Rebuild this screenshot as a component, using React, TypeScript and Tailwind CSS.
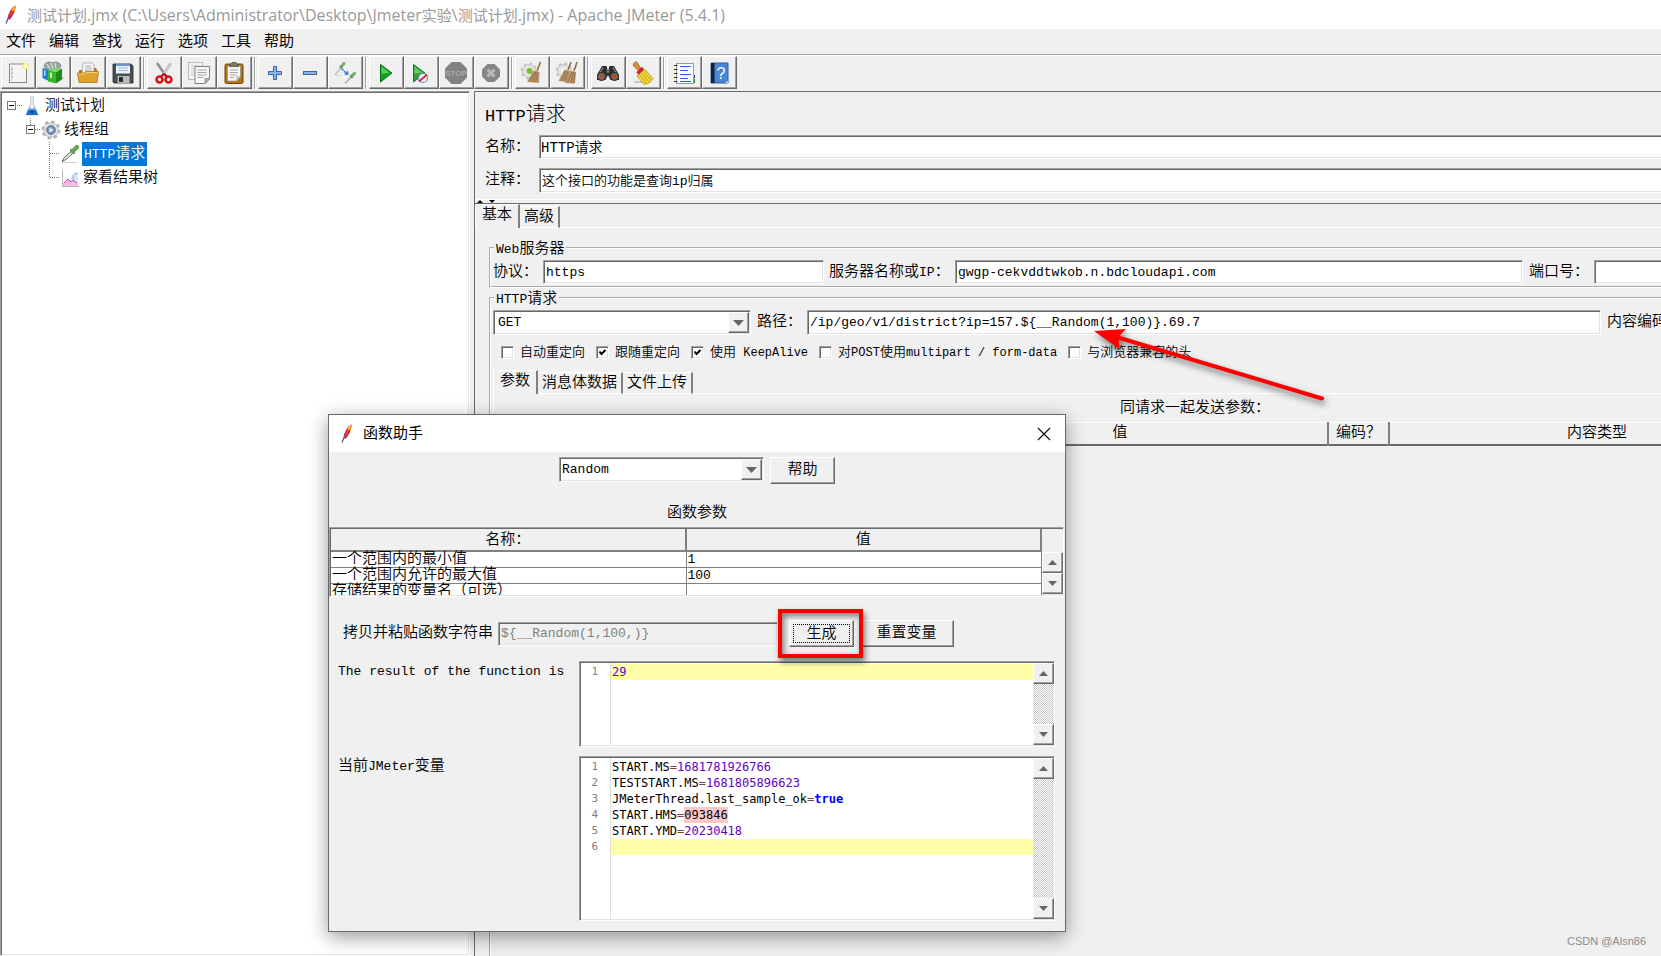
import React from "react";

const raised =
  "border border-t-white border-l-white border-b-[#696969] border-r-[#696969] shadow-[inset_-1px_-1px_0_#a0a0a0] bg-[#f0f0f0]";
const sunken =
  "border border-t-[#a0a0a0] border-l-[#a0a0a0] border-r-white border-b-white shadow-[inset_1px_1px_0_#696969,inset_-1px_-1px_0_#e3e3e3]";
const etched = "border-2 [border-style:groove] border-white min-w-0";

/* Latin runs are set in a size of their own beside the Chinese text. */
function Mix({ children, latin = "text-[13px]" }: { children: string; latin?: string }) {
  return (
    <>
      {children.split(/([\x20-\x7e]+)/).map((part, i) =>
        i % 2 ? (
          <span key={i} className={latin}>
            {part}
          </span>
        ) : (
          part
        ),
      )}
    </>
  );
}

function Feather() {
  return (
    <svg viewBox="0 0 12 20" className="h-5 w-3 shrink-0">
      <path d="M10.5 0.5C7 2 3.500 7 2.500 14L4.500 14.500C7.500 12 10.500 6 10.500 0.500Z" fill="#d22128" />
      <path d="M10.500 0.500C8.500 1.500 7 3 6 5L9.500 6.500C10.500 4.500 11 2.500 10.500 0.500Z" fill="#f69923" />
      <path d="M3.500 9.500L2.500 14L4.500 14.500L6.500 11.500Z" fill="#97245f" />
      <path d="M2.800 14L1 18.500" stroke="#5a3a86" strokeWidth="1.100" />
      <path d="M9.500 2L3.500 13.500" stroke="#fbd0a0" strokeWidth="0.400" />
    </svg>
  );
}

const svg = "size-6";
const NewIcon = () => (
  <svg viewBox="0 0 24 24" className={svg}>
    <rect x="3.500" y="3" width="17" height="18.500" fill="#f5f5f5" stroke="#888" />
    <path d="M5.500 5v15" stroke="#ccc" />
    <path d="M6 8h1M6 12h1M6 16h1" stroke="#777" />
    <circle cx="19.500" cy="5" r="3.200" fill="#f8ee7a" />
    <circle cx="19.500" cy="5" r="1.500" fill="#fff" />
  </svg>
);
const TemplatesIcon = () => (
  <svg viewBox="0 0 24 24" className={svg}>
    <path d="M3 5C4 1 9 0 11 2C14 0 19 1 20 5L17 9H5Z" fill="#9aa5a8" stroke="#5b6a70" strokeWidth="0.600" />
    <path d="M6 3l3 5M10 2l2 6M14 2l1 6" stroke="#e8eef0" />
    <path d="M1.500 7L8 9V20L1.500 17Z" fill="#1d82c8" />
    <path d="M3 9L4.500 9.500V15L3 14.500Z" fill="#a8dcf8" />
    <path d="M8 9L13 7V20L8 21Z" fill="#2aa0dd" />
    <path d="M17 22L23 17L20 15Z" fill="#888" opacity="0.600" />
    <path d="M7 9.500L15 11V22.500L7 20.500Z" fill="#3cb52c" />
    <path d="M9 11.500L11 12V17L9 16.500Z" fill="#c5f3b3" />
    <path d="M15 11L21 7.500V18L15 22.500Z" fill="#1f8a19" />
    <path d="M7 9.500L13 7L21 7.500L15 11Z" fill="#7ddc5f" />
  </svg>
);
const OpenIcon = () => (
  <svg viewBox="0 0 24 24" className={svg}>
    <path d="M3 9H8L9 7H20L21 9V19H3Z" fill="#b87912" />
    <path d="M7 2H16L18 4V13H6Z" fill="#fafafa" stroke="#999" strokeWidth="0.700" />
    <path d="M9 5h6M9 7h7M9 9h7" stroke="#999" strokeWidth="0.800" />
    <path d="M1.500 12H8L9.500 10.500H22.500L21 21.500H3Z" fill="#dfa32f" stroke="#a86c0b" strokeWidth="0.700" />
    <path d="M3 13H8.500L10 11.500H21.500" stroke="#fbdc8c" fill="none" strokeWidth="0.800" />
  </svg>
);
const SaveIcon = () => (
  <svg viewBox="0 0 24 24" className={svg}>
    <path d="M2 3H20L22 5V22H3L2 21Z" fill="#4a4d50" stroke="#27292b" strokeWidth="0.800" />
    <rect x="5" y="3" width="14" height="9.500" fill="#eef4fb" />
    <path d="M5 4h14" stroke="#6c95cf" strokeWidth="2" />
    <path d="M7 7h10M7 9.500h10" stroke="#9db9dc" />
    <rect x="6.500" y="15" width="12" height="7" fill="#b9bcbf" />
    <rect x="8" y="16" width="4" height="5" fill="#2b2d2f" />
  </svg>
);
const CutIcon = () => (
  <svg viewBox="0 0 24 24" className={svg}>
    <path d="M5 2L14.500 16" stroke="#8e9396" strokeWidth="2.600" />
    <path d="M19 2L9.500 16" stroke="#aeb3b6" strokeWidth="2.600" />
    <path d="M19 2L10 15" stroke="#eee" strokeWidth="0.800" />
    <circle cx="7.500" cy="18.500" r="3" fill="none" stroke="#d9141c" strokeWidth="2.600" />
    <circle cx="16.500" cy="18.500" r="3" fill="none" stroke="#d9141c" strokeWidth="2.600" />
    <path d="M9 15.500L12 13L15 15.500" stroke="#b80d14" strokeWidth="1.800" fill="none" />
  </svg>
);
const CopyIcon = () => (
  <svg viewBox="0 0 24 24" className={svg}>
    <rect x="1.500" y="1.500" width="14" height="17" fill="#f3f3f3" stroke="#bbb" />
    <path d="M4 5h9M4 8h4M4 11h4M4 14h4" stroke="#c4c4c4" />
    <path d="M8 5.500H22.500V18L18 22.500H8Z" fill="#f8f8f8" stroke="#808080" />
    <path d="M22.500 17.500H18V22.500Z" fill="#bbb" stroke="#777" strokeWidth="0.700" />
    <path d="M10.500 9h9M10.500 11.500h9M10.500 14h9M10.500 16.500h6" stroke="#a4a4a4" />
  </svg>
);
const PasteIcon = () => (
  <svg viewBox="0 0 24 24" className={svg}>
    <rect x="3" y="3" width="18" height="19.500" rx="1.500" fill="#b57413" stroke="#6d430a" />
    <path d="M5.500 5H18.500V16L14.500 20H5.500Z" fill="#f7f7f7" stroke="#8b8b8b" strokeWidth="0.600" />
    <path d="M18.500 15.500H14.500V20Z" fill="#b5b5b5" />
    <path d="M8 9h8M8 11.500h8M8 14h7M8 16.500h4" stroke="#a5a5a5" />
    <path d="M7.500 5.500C7.500 3 9.500 3.500 10 1.500H14C14.500 3.500 16.500 3 16.500 5.500Z" fill="#777b70" stroke="#45483f" strokeWidth="0.700" />
  </svg>
);
const PlusIcon = () => (
  <svg viewBox="0 0 24 24" className={svg}>
    <path d="M10.500 5.500h3v5h5v3h-5v5h-3v-5h-5v-3h5Z" fill="#8db5e2" stroke="#3566a8" />
  </svg>
);
const MinusIcon = () => (
  <svg viewBox="0 0 24 24" className={svg}>
    <rect x="5.500" y="10.500" width="13" height="3" fill="#8db5e2" stroke="#3566a8" />
  </svg>
);
const ToggleIcon = () => (
  <svg viewBox="0 0 24 24" className={svg}>
    <path d="M2 14L8 6.500" stroke="#c0c5c2" strokeWidth="1.800" />
    <path d="M3 14.500H8" stroke="#d5d5d5" />
    <path d="M8 6L11 2.500" stroke="#7fb073" strokeWidth="3.200" strokeLinecap="round" />
    <path d="M7 5L9.500 7.500" stroke="#6d8169" strokeWidth="1.200" />
    <path d="M9 8L13 12" stroke="#2f78d8" strokeWidth="1.600" strokeDasharray="2 1" />
    <path d="M15.500 14L11 13.500L15 9.500Z" fill="#2f78d8" />
    <path d="M12 22.500L18 16" stroke="#b0b5b2" strokeWidth="1.800" />
    <path d="M18.500 15.500L21.500 12.500" stroke="#7fb073" strokeWidth="3.200" strokeLinecap="round" />
    <path d="M17 14.500L19.500 17" stroke="#6d8169" strokeWidth="1.200" />
  </svg>
);
const PlayIcon = () => (
  <svg viewBox="0 0 24 24" className={svg}>
    <path d="M6.500 3.500L18 12L6.500 21Z" fill="#13a021" stroke="#0b6c14" />
    <path d="M7.500 5.500L15.500 11.500L7.500 13Z" fill="#4fce55" />
  </svg>
);
const PlayNowIcon = () => (
  <svg viewBox="0 0 24 24" className={svg}>
    <path d="M4.500 3.500L16 12L4.500 21Z" fill="#2a9e30" stroke="#1b7a22" />
    <path d="M5.500 5.500L13.500 11.500L5.500 13Z" fill="#66c868" />
    <circle cx="14" cy="17" r="4.500" fill="#eef2fb" stroke="#6d87bd" strokeWidth="1.200" />
    <path d="M10 20.500L18 13.500" stroke="#e02626" strokeWidth="1.700" />
  </svg>
);
const StopIcon = () => (
  <svg viewBox="0 0 24 24" className={svg}>
    <path d="M7.500 1H16.500L23 7.500V16.500L16.500 23H7.500L1 16.500V7.500Z" fill="#828282" />
    <text x="12" y="15" textAnchor="middle" fontSize="8" fontWeight="700" fontFamily="Liberation Sans, sans-serif" fill="#a8a8a8">
      STOP
    </text>
  </svg>
);
const ShutdownIcon = () => (
  <svg viewBox="0 0 24 24" className={svg}>
    <path d="M8.500 3H15.500L21 8.500V15.500L15.500 21H8.500L3 15.500V8.500Z" fill="#868686" />
    <path d="M8.500 8.500L15.500 15.500M15.500 8.500L8.500 15.500" stroke="#b8b8b8" strokeWidth="3" />
  </svg>
);
const GearShape = () => (
  <g>
    <circle cx="9" cy="10" r="7.200" fill="none" stroke="#c6c9c3" strokeWidth="2.400" strokeDasharray="3 2.650" />
    <circle cx="9" cy="10" r="6.500" fill="#e2e4e0" stroke="#b9bcb5" strokeWidth="0.700" />
    <circle cx="9" cy="10" r="3.200" fill="#f3f3f0" />
  </g>
);
const ClearIcon = () => (
  <svg viewBox="0 0 24 24" className={svg}>
    <GearShape />
    <circle cx="9.500" cy="10" r="3" fill="#79c023" />
    <path d="M20.500 1L17 10" stroke="#9a6d3c" strokeWidth="1.600" />
    <path d="M13.500 9.500L19.500 11L19 22L7 21Z" fill="#b9946a" />
    <path d="M14.500 11L9.500 20.500M16 11L12.500 21M17.500 11.500L15.500 21" stroke="#8a643a" strokeWidth="0.800" />
  </svg>
);
const ClearAllIcon = () => (
  <svg viewBox="0 0 24 24" className={svg}>
    <GearShape />
    <path d="M16 1L13 9M22 1L19 10" stroke="#9a6d3c" strokeWidth="1.600" />
    <path d="M9.500 8.500L15 10L12 21L3.500 20Z" fill="#b5936a" />
    <path d="M15.500 9.500L21 11L20 22.500L9.500 22Z" fill="#b9946a" />
    <path d="M11 10L6.500 19.500M13 11L9.500 20M17 11L12.500 21.500M18.500 11L16 22M20 11.500L18.500 22" stroke="#8a643a" strokeWidth="0.800" />
  </svg>
);
const FindIcon = () => (
  <svg viewBox="0 0 24 24" className={svg}>
    <path d="M6 5H10.500L11.500 9H12.500L13.500 5H18L23 14V19H14.500L12 14L9.500 19H1V14Z" fill="#2c2c2c" />
    <path d="M7 6.500L4.500 11M17 6.500L19.500 11" stroke="#8b8b8b" strokeWidth="1.300" />
    <circle cx="5.500" cy="15.500" r="4.500" fill="#3b3b3b" />
    <circle cx="18.500" cy="15.500" r="4.500" fill="#3b3b3b" />
    <circle cx="5.500" cy="15.500" r="2.800" fill="#a4532c" stroke="#999" strokeWidth="0.500" />
    <circle cx="18.500" cy="15.500" r="2.800" fill="#a4532c" stroke="#999" strokeWidth="0.500" />
    <circle cx="12" cy="10.500" r="1.500" fill="#777" />
  </svg>
);
const BroomIcon = () => (
  <svg viewBox="0 0 24 24" className={svg}>
    <path d="M3 21H20" stroke="#bbb" strokeWidth="1.500" />
    <path d="M3 2C4.500 0 7 1 7 3L10 8L7.500 9.500L3.500 6C2 5 2 3 3 2Z" fill="#d98e3a" stroke="#8c5515" strokeWidth="0.700" />
    <path d="M11 11L6 15L13 23.500C17 23 21 20.500 22 17.500L14 8.500Z" fill="#f0d53c" stroke="#a88a0c" strokeWidth="0.700" />
    <path d="M9 14.500L15 22M11 13L18 21M13 11.500L20 19" stroke="#bb9c16" strokeWidth="0.900" />
    <path d="M6.500 12.500L12 7" stroke="#d51f2c" strokeWidth="3.200" />
  </svg>
);
const LogIcon = () => (
  <svg viewBox="0 0 24 24" className={svg}>
    <path d="M20 14h3v3h-3z" fill="#2144c4" />
    <path d="M20 18h3v4h-3z" fill="#1c8c28" />
    <rect x="4.500" y="2.500" width="17" height="20" fill="#fdfdfd" stroke="#999" />
    <path d="M8 5.500h11M8 9.500h8M8 13.500h11M8 17.500h8M8 20.500h11" stroke="#1a6ae0" strokeWidth="1.200" />
    <path d="M2 4.500h3.500M2 8.500h3.500M2 12.500h3.500M2 16.500h3.500M2 20.500h3.500" stroke="#333" strokeWidth="1.200" />
  </svg>
);
const HelpIcon = () => (
  <svg viewBox="0 0 24 24" className={svg}>
    <path d="M4 2H21V22H4Z" fill="#4a86d6" stroke="#2c5c9f" />
    <path d="M4 2H7.500V22H4Z" fill="#17212f" />
    <path d="M21 20L18 22H21Z" fill="#ddd" />
    <text x="14" y="17.500" textAnchor="middle" fontSize="16" fontFamily="Liberation Sans, sans-serif" fill="#fff">
      ?
    </text>
  </svg>
);

const toolGroups: [string, () => React.JSX.Element][][] = [
  [["新建", NewIcon], ["模板", TemplatesIcon], ["打开", OpenIcon], ["保存", SaveIcon]],
  [["剪切", CutIcon], ["复制", CopyIcon], ["粘贴", PasteIcon]],
  [["展开", PlusIcon], ["折叠", MinusIcon], ["切换", ToggleIcon]],
  [["启动", PlayIcon], ["不停顿启动", PlayNowIcon], ["停止", StopIcon], ["关闭", ShutdownIcon]],
  [["清除", ClearIcon], ["清除全部", ClearAllIcon]],
  [["搜索", FindIcon], ["重置搜索", BroomIcon]],
  [["函数助手", LogIcon], ["帮助", HelpIcon]],
];

function Toolbar() {
  return (
    <div className="flex h-9 shrink-0 items-center border-t border-[#a0a0a0] bg-[#f0f0f0] pl-px shadow-[inset_0_1px_0_#fff]">
      {toolGroups.map((group, g) => (
        <div key={g} className="flex items-center">
          {g > 0 && <span className="mx-0.5 h-8 w-0.5 border-l border-[#a0a0a0] bg-white" />}
          {group.map(([name, Icon]) => (
            <button key={name} aria-label={name} className={`${raised} flex h-[33px] w-[35px] items-center justify-center pr-0.5`}>
              <Icon />
            </button>
          ))}
        </div>
      ))}
    </div>
  );
}

const dots = { stroke: "#777", strokeDasharray: "1 1", fill: "none" };
function Expander({ x }: { x: number }) {
  return (
    <g>
      <rect x={x + 0.5} y="7.500" width="8" height="8" fill="#fff" stroke="#777" />
      <path d={`M${x + 2} 11.500h5`} stroke="#000" />
    </g>
  );
}
const FlaskIcon = () => (
  <svg viewBox="0 0 14 20" className="h-5 w-3.5">
    <path d="M5.500 1H8.500V8L13 19H1L5.500 8Z" fill="#e9eef3" stroke="#b4bfca" strokeWidth="0.800" />
    <path d="M3.500 12.500H10.500L13 19H1Z" fill="#1b6fc9" />
    <path d="M3.500 12.500H10.500L11 14H3Z" fill="#7fb2e6" />
    <circle cx="7" cy="16" r="1.500" fill="#0d3f86" />
  </svg>
);
const ThreadIcon = () => (
  <svg viewBox="0 0 20 20" className="size-5">
    <circle cx="10" cy="10" r="8" fill="none" stroke="#b4b4b4" strokeWidth="3" strokeDasharray="3.300 2.980" />
    <circle cx="10" cy="10" r="7.200" fill="#e2e2e2" stroke="#aaa" strokeWidth="0.700" />
    <circle cx="10" cy="10" r="4.200" fill="#7d9cc9" stroke="#3f5f93" />
    <path d="M8.500 7.500L12.500 10L8.500 12.500Z" fill="#e6eefb" />
  </svg>
);
const DropperIcon = () => (
  <svg viewBox="0 0 20 20" className="size-5">
    <path d="M2 18.500H17" stroke="#ccc" />
    <path d="M2 17.500L4 14L11 7L13 9L6 15.500Z" fill="#e6e9e6" stroke="#555" strokeWidth="0.900" />
    <path d="M10.500 5.500L14.500 9.500" stroke="#3d5c38" strokeWidth="2" />
    <path d="M12.500 7.500L17 3" stroke="#64a656" strokeWidth="4.200" strokeLinecap="round" />
  </svg>
);
const ChartIcon = () => (
  <svg viewBox="0 0 20 20" className="size-5">
    <path d="M2.500 2V18.500H19" stroke="#b5b5b5" fill="none" />
    <path d="M3 18V15L8 11L11 14.500L17 13L18 18Z" fill="#f6b8e6" />
    <path d="M10 14C12 6 15 4 18 4V13C15 15 12 15 10 14Z" fill="#d5e6fb" />
    <path d="M4 15L8 11L10.500 14L13 12.500L17 15" stroke="#d23fb4" fill="none" />
    <path d="M17 5C13 6 12 9 14 12" stroke="#7fa6e2" fill="none" />
  </svg>
);

function Tree() {
  const row = "flex h-6 items-center";
  return (
    <nav aria-label="测试计划树" className={`${sunken} w-[470px] shrink-0 bg-white pt-0.5 pl-0.5 text-[15px]`}>
      <div className={row}>
        <svg viewBox="0 0 22 24" className="h-6 w-[22px]">
          <path d="M14 11.500H20" {...dots} />
          <Expander x={4} />
        </svg>
        <FlaskIcon />
        <span className="ml-1.5 pt-0.5">测试计划</span>
      </div>
      <div className={row}>
        <svg viewBox="0 0 38 24" className="h-6 w-[38px]">
          <path d="M27.500 0V7M32 11.500H38" {...dots} />
          <Expander x={23} />
        </svg>
        <ThreadIcon />
        <span className="ml-[3px] pt-0.5">线程组</span>
      </div>
      <div className={row}>
        <svg viewBox="0 0 57 24" className="h-6 w-[57px]">
          <path d="M46.500 0V24M47 11.500H57" {...dots} />
        </svg>
        <DropperIcon />
        <span className="ml-0.5 flex h-6 items-center bg-[#0078d7] px-0.5 pt-0.5 text-white">
          <span><Mix>HTTP请求</Mix></span>
        </span>
      </div>
      <div className={row}>
        <svg viewBox="0 0 57 24" className="h-6 w-[57px]">
          <path d="M46.500 0V12M47 11.500H57" {...dots} />
        </svg>
        <ChartIcon />
        <span className="ml-[3px] pt-0.5">察看结果树</span>
      </div>
    </nav>
  );
}

function Tabs({ names }: { names: string[] }) {
  return (
    <div role="tablist" className="flex h-6 items-end text-[15px] leading-5">
      {names.map((name, i) =>
        i === 0 ? (
          <button
            key={name}
            role="tab"
            aria-selected
            className="h-6 border-t border-l border-t-white border-l-white border-r-2 border-r-[#808080] px-1.5 pb-px"
          >
            {name}
          </button>
        ) : (
          <button
            key={name}
            role="tab"
            aria-selected={false}
            className="h-[22px] border-t border-b border-white border-r-2 border-r-[#808080] px-1 pt-px"
          >
            {name}
          </button>
        ),
      )}
      <span className="h-px flex-1 bg-white" />
    </div>
  );
}

function ComboBox({ id, label, value, className }: { id: string; label: string; value: string; className: string }) {
  return (
    <div className={`relative shrink-0 ${className}`}>
      <select id={id} aria-label={label} defaultValue={value} className={`${sunken} h-full w-full appearance-none bg-white text-[13px] ${id === "method" ? "pl-1" : "pl-0.5"}`}>
        <option>{value}</option>
      </select>
      <span className={`${raised} pointer-events-none absolute inset-y-0.5 right-0.5 flex w-[21px] items-center justify-center`}>
        <svg viewBox="0 0 11 6" className="h-1.5 w-[11px]">
          <path d="M0 0H11L5.500 6Z" fill="#666" />
        </svg>
      </span>
    </div>
  );
}

function Check({ label, checked = false }: { label: string; checked?: boolean }) {
  return (
    <label className="flex items-center gap-1.5 whitespace-nowrap">
      <span className="grid">
        <input type="checkbox" defaultChecked={checked} className={`${sunken} peer col-start-1 row-start-1 size-[13px] appearance-none bg-white`} />
        <svg viewBox="0 0 13 13" className="pointer-events-none invisible col-start-1 row-start-1 size-[13px] peer-checked:visible">
          <path d="M3.500 5.500L5.500 8L9.500 4" stroke="#000" strokeWidth="2" fill="none" />
        </svg>
      </span>
      <span className="pt-0.5 whitespace-pre">
        <Mix latin="text-[12px]">{label}</Mix>
      </span>
    </label>
  );
}

const field = `${sunken} bg-white pl-0.5 text-[13px] outline-none`;
const label = "shrink-0 pt-0.5";

function RequestPane() {
  return (
    <main className="ml-1 flex min-w-0 flex-1 flex-col overflow-hidden border-t border-l border-[#696969] bg-[#f0f0f0] text-[15px] whitespace-nowrap">
      <h1 className="flex h-[43px] items-center pt-1 pl-2.5 text-[20px] font-light">
        <span>
          <Mix latin="text-[17px]">HTTP请求</Mix>
        </span>
      </h1>
      <div className="flex h-6 items-center pl-2.5">
        <label htmlFor="name" className={`${label} w-[54px]`}>名称：</label>
        <input id="name" defaultValue="HTTP请求" className={`${sunken} -mr-1 h-6 min-w-0 flex-1 bg-white pb-0.5 pl-px text-[14px]`} />
      </div>
      <div className="mt-[9px] flex h-[25px] items-center pl-2.5">
        <label htmlFor="comment" className={`${label} w-[54px]`}>注释：</label>
        <input id="comment" defaultValue="这个接口的功能是查询ip归属" className={`${field} -mr-1 h-[25px] min-w-0 flex-1 pb-0.5`} />
      </div>
      <div className="mt-1.5 flex h-[5px] items-start border-t border-b border-t-white border-b-[#696969] pl-0.5">
        <svg viewBox="0 0 18 3" className="h-[3px] w-[18px]">
          <path d="M0 3H6L3 0ZM12 0H18L15 3Z" fill="#000" />
        </svg>
      </div>
      <Tabs names={["基本", "高级"]} />

      <div className="flex flex-1 flex-col pt-3 pl-3.5">
        <fieldset className={`${etched} border-r-0 pb-0.5 pl-0.5`}>
          <legend className="ml-px h-4 px-0.5 pt-0.5 leading-4">
            <Mix>Web服务器</Mix>
          </legend>
          <div className="flex h-7 items-center pt-1">
            <label htmlFor="protocol" className={`${label} w-[50px]`}>协议：</label>
            <input id="protocol" defaultValue="https" className={`${field} h-6 w-[281px] shrink-0`} />
            <label htmlFor="server" className={`${label} ml-[5px] w-[126px]`}>
              <Mix>服务器名称或IP：</Mix>
            </label>
            <input id="server" defaultValue="gwgp-cekvddtwkob.n.bdcloudapi.com" className={`${field} h-6 min-w-0 flex-1`} />
            <label htmlFor="port" className={`${label} ml-1.5 w-[65px]`}>端口号：</label>
            <input id="port" className={`${field} -mr-1 h-6 w-[71px] shrink-0`} />
          </div>
        </fieldset>

        <fieldset className={`${etched} mt-0.5 flex-1 border-r-0 border-b-0 pl-0.5`}>
          <legend className="ml-px h-4 px-0.5 pt-0.5 leading-4">
            <Mix>HTTP请求</Mix>
          </legend>
          <div className="flex h-[29px] items-center pt-1">
            <ComboBox id="method" label="方法" value="GET" className="h-[25px] w-[258px]" />
            <label htmlFor="path" className={`${label} ml-1.5 w-[50px]`}>路径：</label>
            <input id="path" defaultValue="/ip/geo/v1/district?ip=157.${__Random(1,100)}.69.7" className={`${field} h-[25px] min-w-0 flex-1`} />
            <span className={`${label} ml-1.5 w-[54px]`}>内容编码</span>
          </div>
          <div className="mt-[7px] flex h-5 items-center gap-[11px] pl-2 text-[13px]">
            <Check label="自动重定向" />
            <Check label="跟随重定向" checked />
            <Check label="使用 KeepAlive" checked />
            <Check label="对POST使用multipart / form-data" />
            <Check label="与浏览器兼容的头" />
          </div>
          <div className="mt-2">
            <Tabs names={["参数", "消息体数据", "文件上传"]} />
          </div>
          <div className="overflow-hidden border-l border-white pl-0.5">
            <table className="w-[1398px] table-fixed border-collapse">
              <caption className="h-7 pt-px leading-7">同请求一起发送参数：</caption>
              <thead>
                <tr className="h-[22px] border-t border-b-2 border-t-white border-b-[#696969] leading-[18px] [&>*]:border-r-2 [&>*]:border-[#808080] [&>*]:p-0 [&>*]:pt-0.5 [&>*]:font-[350]">
                  <th className="w-[416px]">名称：</th>
                  <th className="w-[416px]">值</th>
                  <th className="w-[61px]">编码？</th>
                  <th className="w-[416px]">内容类型</th>
                  <td />
                </tr>
              </thead>
            </table>
          </div>
        </fieldset>
      </div>
    </main>
  );
}

function ScrollButton({ up = false }: { up?: boolean }) {
  return (
    <button aria-label={up ? "向上滚动" : "向下滚动"} className={`${raised} flex h-[21px] w-[21px] items-center justify-center`}>
      <svg viewBox="0 0 9 5" className="h-[5px] w-[9px]">
        <path d={up ? "M0 5H9L4.500 0Z" : "M0 0H9L4.500 5Z"} fill="#666" />
      </svg>
    </button>
  );
}

function Editor({ label, lines, active, className }: { label: string; lines: React.ReactNode[]; active: number; className: string }) {
  return (
    <div
      role="group"
      aria-label={label}
      className={`${sunken} flex min-w-0 flex-1 bg-white py-px pl-px font-['DejaVu_Sans_Mono',monospace] text-[12px] leading-4 font-normal ${className}`}
    >
      <div className="w-[30px] shrink-0 border-r border-[#ddd] pt-px pr-3 text-right text-[11px] text-[#808080]">
        {lines.map((_, i) => (
          <div key={i}>{i + 1}</div>
        ))}
      </div>
      <div className="min-w-0 flex-1 pt-px">
        {lines.map((line, i) => (
          <div key={i} className={`h-4 pl-px ${i === active ? "bg-[#ffffaa]" : ""}`}>
            {line}
          </div>
        ))}
      </div>
      <div className="flex flex-col justify-between bg-[repeating-conic-gradient(#fff_0_25%,#c8c8c8_0_50%)] bg-size-[2px_2px]">
        <ScrollButton up />
        <ScrollButton />
      </div>
    </div>
  );
}

function Entry({ name, children }: { name: string; children: React.ReactNode }) {
  return (
    <>
      {name}
      <span className="text-[#804040]">=</span>
      {children}
    </>
  );
}
const Num = ({ children }: { children: string }) => <span className="text-[#6400c8]">{children}</span>;

const params = [
  ["一个范围内的最小值", "1"],
  ["一个范围内允许的最大值", "100"],
  ["存储结果的变量名（可选）", ""],
];

function FunctionHelper() {
  return (
    <section
      role="dialog"
      aria-label="函数助手"
      className="absolute top-[414px] left-[328px] flex w-[738px] flex-col border border-[#696969] bg-[#f0f0f0] pb-2.5 text-[15px] whitespace-nowrap shadow-[0_5px_18px_rgba(0,0,0,0.4)]"
    >
      <header className="flex h-[37px] items-center bg-white pr-3.5 pl-3">
        <Feather />
        <h2 className="ml-2.5 flex-1 pt-[3px] font-normal">函数助手</h2>
        <button aria-label="关闭">
          <svg viewBox="0 0 14 14" className="size-3.5">
            <path d="M1 1L13 13M13 1L1 13" stroke="#111" strokeWidth="1.200" />
          </svg>
        </button>
      </header>

      <div className="mt-[5px] flex h-[27px] items-start justify-center gap-1.5">
        <ComboBox id="function" label="函数" value="Random" className="h-[25px] w-[205px]" />
        <button className={`${raised} h-[27px] w-[65px] leading-6`}>帮助</button>
      </div>

      <p className="mt-[18px] h-[25px] text-center leading-6">函数参数</p>

      <div className={`${sunken} mr-px flex h-[70px] overflow-hidden bg-white py-px pl-px`}>
        <div className="min-w-0 flex-1 overflow-hidden">
          <table className="w-full table-fixed border-separate border-spacing-0 leading-[15px]">
            <thead>
              <tr className="h-[23px] bg-[#f0f0f0] [&>th]:border-r-2 [&>th]:border-b-2 [&>th]:border-[#808080] [&>th]:p-0 [&>th]:pt-px [&>th]:font-[350]">
                <th>名称：</th>
                <th>值</th>
              </tr>
            </thead>
            <tbody>
              {params.map(([name, value]) => (
                <tr key={name} className="h-4 [&>td]:h-4 [&>td]:border-r [&>td]:border-b [&>td]:border-[#808080] [&>td]:p-0 [&>td]:pl-px">
                  <td>{name}</td>
                  <td className="text-[13px]">{value}</td>
                </tr>
              ))}
            </tbody>
          </table>
        </div>
        <div className="flex flex-col bg-[#f0f0f0] pt-[23px]">
          <ScrollButton up />
          <ScrollButton />
        </div>
      </div>

      <div className="mt-[11px] flex h-[51px] items-center pl-3.5">
        <label htmlFor="call" className={label}>拷贝并粘贴函数字符串</label>
        <input id="call" readOnly defaultValue="${__Random(1,100,)}" className={`${sunken} ml-[5px] h-6 w-[280px] bg-[#f0f0f0] pl-0.5 text-[13px] text-[#808080]`} />
        <div className="relative z-10 border-4 border-[#f90000] py-[7px] pr-[5px] pl-[7px] shadow-[2px_4px_6px_rgba(0,0,0,0.5),inset_2px_3px_6px_rgba(0,0,0,0.5)]">
          <button className={`${raised} flex h-[27px] w-[65px] p-[3px]`}>
            <span className="flex-1 border border-dotted border-black leading-5">生成</span>
          </button>
        </div>
        <button className={`${raised} -ml-1 h-[27px] w-[95px] leading-6`}>重置变量</button>
      </div>

      <div className="mt-0.5 flex pr-2.5 pl-[9px]">
        <p className="w-[241px] shrink-0 leading-[22px]">
          <Mix>The result of the function is</Mix>
        </p>
        <Editor label="函数结果" className="h-[86px]" active={0} lines={[<Num>29</Num>]} />
      </div>
      <div className="mt-[9px] flex pr-2.5 pl-[9px]">
        <p className="w-[241px] shrink-0 leading-[22px]">
          <Mix>当前JMeter变量</Mix>
        </p>
        <Editor
          label="当前JMeter变量"
          className="h-[165px]"
          active={5}
          lines={[
            <Entry name="START.MS"><Num>1681781926766</Num></Entry>,
            <Entry name="TESTSTART.MS"><Num>1681805896623</Num></Entry>,
            <Entry name="JMeterThread.last_sample_ok"><b className="font-bold text-[#0000ff]">true</b></Entry>,
            <Entry name="START.HMS"><span className="inline-block bg-[#ffc8c8]">093846</span></Entry>,
            <Entry name="START.YMD"><Num>20230418</Num></Entry>,
            null,
          ]}
        />
      </div>
    </section>
  );
}

export default function App() {
  return (
    <div className="relative flex h-screen flex-col overflow-hidden bg-[#f0f0f0] font-['Liberation_Mono','Noto_Sans_CJK_SC',monospace] font-[350] text-black">
      <header className="flex h-[29px] shrink-0 items-center bg-white pl-[5px]">
        <Feather />
        <span className="ml-2.5 font-['Open_Sans','Noto_Sans_CJK_SC',sans-serif] text-[15px] font-normal whitespace-nowrap text-[#999]">
          <Mix latin="text-[16px]">
            {"测试计划.jmx (C:\\Users\\Administrator\\Desktop\\Jmeter实验\\测试计划.jmx) - Apache JMeter (5.4.1)"}
          </Mix>
        </span>
      </header>
      <div role="menubar" className="flex h-[25px] shrink-0 items-center gap-[13px] pt-0.5 pl-1.5 text-[15px] leading-5 font-normal">
        {["文件", "编辑", "查找", "运行", "选项", "工具", "帮助"].map((item) => (
          <button key={item} role="menuitem">{item}</button>
        ))}
      </div>
      <Toolbar />
      <div className="mt-px flex min-h-0 flex-1">
        <Tree />
        <RequestPane />
      </div>
      <FunctionHelper />
      <svg viewBox="0 0 240 84" className="pointer-events-none absolute top-[324px] left-[1090px] h-[84px] w-[240px] drop-shadow-[2px_4px_3px_rgba(0,0,0,0.5)]">
        <path d="M28 13.500L232 74.500" stroke="#f00" strokeWidth="4" strokeLinecap="round" />
        <path d="M4 7L36 5L28 13.500L30 25.500Z" fill="#f00" />
      </svg>
      <span className="absolute right-[15px] bottom-[7px] font-['Liberation_Sans',sans-serif] text-[11px] leading-4 font-normal text-[#8a8a8a]">CSDN @Alsn86</span>
    </div>
  );
}
